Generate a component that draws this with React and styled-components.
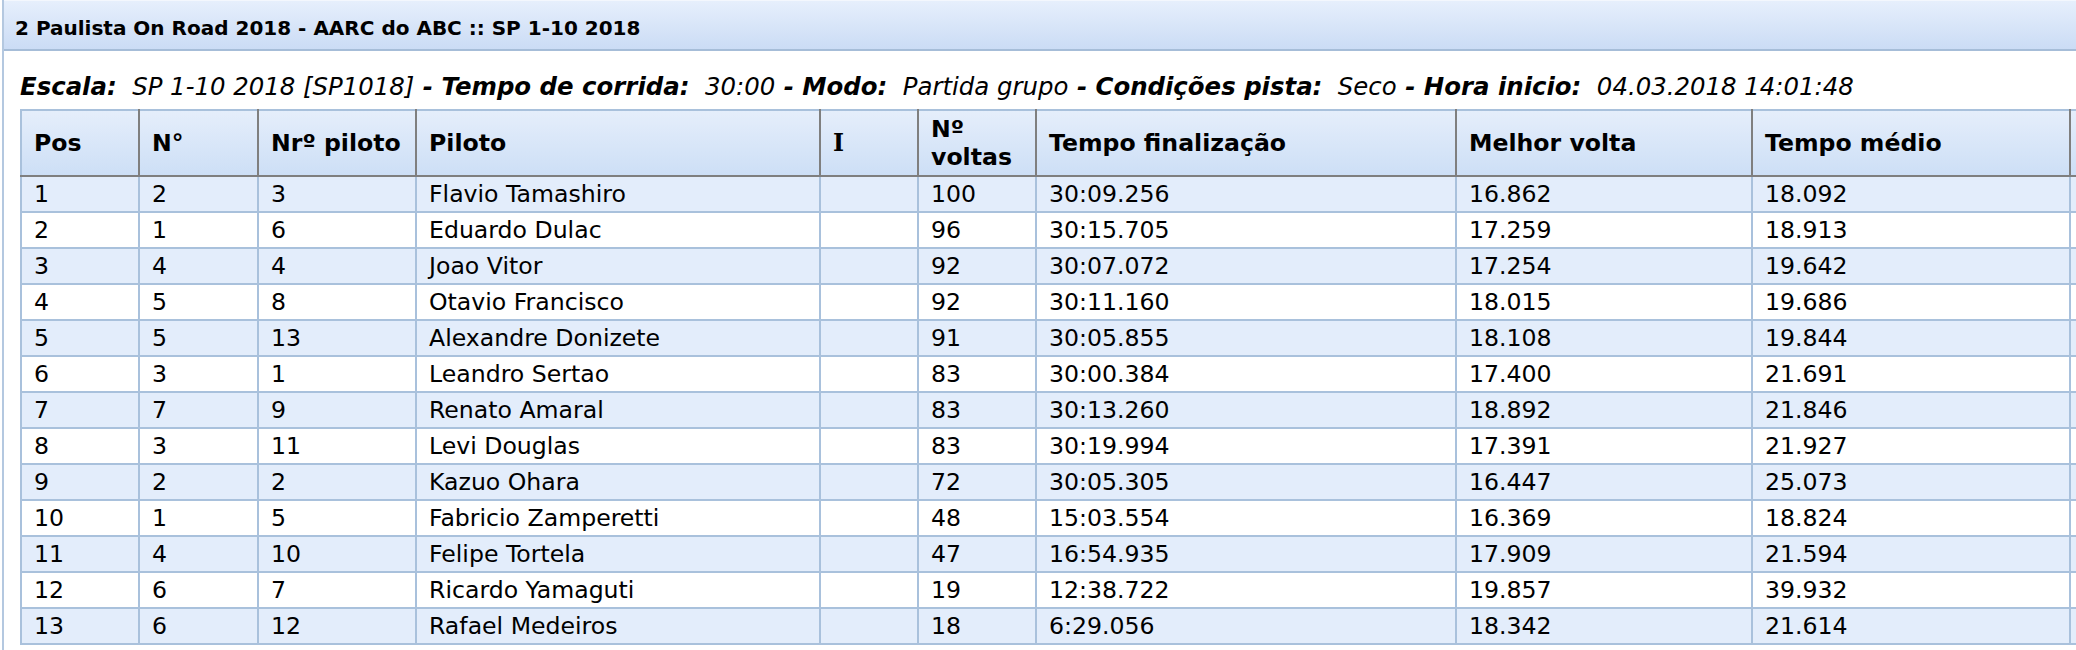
import React from 'react'
import styled, { createGlobalStyle } from 'styled-components'

const GlobalStyle = createGlobalStyle`
    html, body {
        margin: 0;
        padding: 0;
        background: #ffffff;
        overflow: hidden;
    }
    body {
        font-family: "DejaVu Sans", Verdana, sans-serif;
        color: #000000;
    }
`

const Panel = styled.div`
    margin-left: 2px;
    border-left: 2px solid #b4c8e0;
    min-height: 650px;
    width: 2300px;
`

const TitleBar = styled.div`
    display: flex;
    align-items: center;
    box-sizing: border-box;
    height: 51px;
    padding: 6px 0 0 11px;
    border-top: 1px solid #f3f7fd;
    border-bottom: 2px solid #a6bdd8;
    background: linear-gradient(#e6effc, #cbdcf5);
    font-size: 20px;
    font-weight: bold;
    white-space: nowrap;
`

const Body = styled.div`
    padding: 22px 0 0 16px;
`

const InfoLine = styled.div`
    font-size: 24.4px;
    line-height: 28px;
    font-style: italic;
    white-space: nowrap;
    margin-bottom: 8px;
`

const Label = styled.b`
    font-weight: bold;
`

const Table = styled.table`
    border-collapse: collapse;
    table-layout: fixed;
    width: ${p => p.$width}px;
    font-size: 23.6px;
`

const Col = styled.col`
    width: ${p => p.$w}px;
`

const HeadCell = styled.th`
    box-sizing: border-box;
    height: 66px;
    padding: 0 8px 0 12px;
    text-align: left;
    vertical-align: middle;
    font-weight: bold;
    line-height: 28px;
    background: linear-gradient(#e5eefb, #cddff6);
    border: 2px solid #7f7f7f;
    border-top-color: #a9c1dc;
    white-space: nowrap;
    &:first-child {
        border-left-color: #a9c1dc;
    }
`

const SerifGlyph = styled.span`
    font-family: "DejaVu Serif", "Liberation Serif", serif;
`

const Row = styled.tr`
    background: ${p => (p.$alt ? '#e3edfb' : '#ffffff')};
`

const Cell = styled.td`
    box-sizing: border-box;
    height: 36px;
    padding: 0 8px 0 12px;
    line-height: 30px;
    white-space: nowrap;
    overflow: hidden;
    border: 2px solid #a9c1dc;
`

const columns = [
    { w: 118, label: 'Pos' },
    { w: 119, label: 'N°' },
    { w: 158, label: 'Nrº piloto' },
    { w: 404, label: 'Piloto' },
    { w: 98, label: 'I', serif: true },
    { w: 118, label: <>Nº<br />voltas</> },
    { w: 420, label: 'Tempo finalização' },
    { w: 296, label: 'Melhor volta' },
    { w: 318, label: 'Tempo médio' },
    { w: 200, label: '' },
]

const results = [
    ['1', '2', '3', 'Flavio Tamashiro', '', '100', '30:09.256', '16.862', '18.092'],
    ['2', '1', '6', 'Eduardo Dulac', '', '96', '30:15.705', '17.259', '18.913'],
    ['3', '4', '4', 'Joao Vitor', '', '92', '30:07.072', '17.254', '19.642'],
    ['4', '5', '8', 'Otavio Francisco', '', '92', '30:11.160', '18.015', '19.686'],
    ['5', '5', '13', 'Alexandre Donizete', '', '91', '30:05.855', '18.108', '19.844'],
    ['6', '3', '1', 'Leandro Sertao', '', '83', '30:00.384', '17.400', '21.691'],
    ['7', '7', '9', 'Renato Amaral', '', '83', '30:13.260', '18.892', '21.846'],
    ['8', '3', '11', 'Levi Douglas', '', '83', '30:19.994', '17.391', '21.927'],
    ['9', '2', '2', 'Kazuo Ohara', '', '72', '30:05.305', '16.447', '25.073'],
    ['10', '1', '5', 'Fabricio Zamperetti', '', '48', '15:03.554', '16.369', '18.824'],
    ['11', '4', '10', 'Felipe Tortela', '', '47', '16:54.935', '17.909', '21.594'],
    ['12', '6', '7', 'Ricardo Yamaguti', '', '19', '12:38.722', '19.857', '39.932'],
    ['13', '6', '12', 'Rafael Medeiros', '', '18', '6:29.056', '18.342', '21.614'],
]

const info = [
    ['Escala:', 'SP 1-10 2018 [SP1018]'],
    [' - Tempo de corrida:', '30:00'],
    [' - Modo:', 'Partida grupo'],
    [' - Condições pista:', 'Seco'],
    [' - Hora inicio:', '04.03.2018 14:01:48'],
]

export default function App() {
    const tableWidth = columns.reduce((s, c) => s + c.w, 0)
    return (
        <Panel>
            <GlobalStyle />
            <TitleBar>2 Paulista On Road 2018 - AARC do ABC :: SP 1-10 2018</TitleBar>
            <Body>
                <InfoLine>
                    {info.map(([label, value]) => (
                        <React.Fragment key={label}>
                            <Label>{label}</Label>
                            {'\u00a0 ' + value}
                        </React.Fragment>
                    ))}
                </InfoLine>
                <Table $width={tableWidth}>
                    <colgroup>
                        {columns.map((c, i) => <Col key={i} $w={c.w} />)}
                    </colgroup>
                    <thead>
                        <tr>
                            {columns.map((c, i) => (
                                <HeadCell key={i}>
                                    {c.serif ? <SerifGlyph>{c.label}</SerifGlyph> : c.label}
                                </HeadCell>
                            ))}
                        </tr>
                    </thead>
                    <tbody>
                        {results.map((r, i) => (
                            <Row key={i} $alt={i % 2 === 0}>
                                {r.map((v, j) => <Cell key={j}>{v}</Cell>)}
                                <Cell />
                            </Row>
                        ))}
                    </tbody>
                </Table>
            </Body>
        </Panel>
    )
}
